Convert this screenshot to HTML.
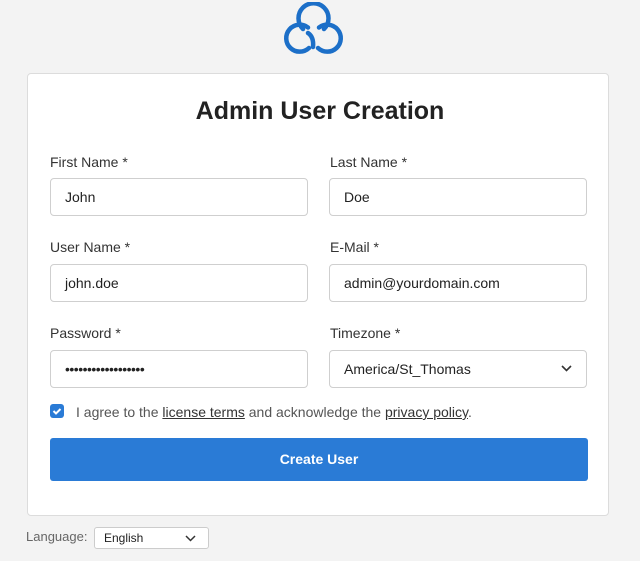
<!DOCTYPE html>
<html><head><style>
body{margin:0;background:#f3f3f3;font-family:"Liberation Sans",sans-serif;width:640px;height:561px;position:relative;overflow:hidden;color:#222}
.card{position:absolute;left:27px;top:73px;width:582px;height:443px;background:#fff;border:1px solid #dcdcdc;border-radius:4px;box-sizing:border-box}
h1{position:absolute;left:0;right:0;top:97px;margin:0;text-align:center;font-size:25px;font-weight:bold;color:#222}
.lbl{position:absolute;font-size:14px;color:#333}
.inp{position:absolute;width:258px;height:38px;border:1px solid #cfcfcf;border-radius:4px;box-sizing:border-box;font-size:14px;padding-left:14px;line-height:36px;background:#fff;color:#222}
.btn{position:absolute;left:50px;top:438px;width:538px;height:43px;background:#2a7bd6;border-radius:3px;color:#fff;font-weight:bold;font-size:14px;text-align:center;line-height:43px}
</style></head><body>
<svg style="position:absolute;left:283px;top:2px" width="62" height="54" viewBox="0 0 62 54" fill="none" stroke="#1c6fc8" stroke-width="4.5" stroke-linecap="round">
<path d="M20 27 A15 15 0 1 1 41 27"/>
<path d="M25 25.5 A13.5 13.5 0 1 0 26 46"/>
<path d="M36 25.5 A13.5 13.5 0 1 1 35 46"/>
<path d="M25 31 Q31 35 30 45"/>
</svg>
<div class="card"></div>
<h1>Admin User Creation</h1>
<div class="lbl" style="left:50px;top:154px">First Name *</div>
<div class="lbl" style="left:330px;top:154px">Last Name *</div>
<div class="inp" style="left:50px;top:178px">John</div>
<div class="inp" style="left:329px;top:178px">Doe</div>
<div class="lbl" style="left:50px;top:239px">User Name *</div>
<div class="lbl" style="left:330px;top:239px">E-Mail *</div>
<div class="inp" style="left:50px;top:264px">john.doe</div>
<div class="inp" style="left:329px;top:264px">admin@yourdomain.com</div>
<div class="lbl" style="left:50px;top:325px">Password *</div>
<div class="lbl" style="left:330px;top:325px">Timezone *</div>
<div class="inp" style="left:50px;top:350px;letter-spacing:-0.5px">••••••••••••••••••</div>
<div class="inp" style="left:329px;top:350px">America/St_Thomas<svg style="position:absolute;right:14px;top:14px" width="11" height="8"><path d="M1 1l4.5 4.5L10 1" stroke="#333" stroke-width="1.6" fill="none"/></svg></div>
<div style="position:absolute;left:50px;top:404px;width:14px;height:14px;background:#2a7bd6;border-radius:3px"><svg width="14" height="14"><path d="M3.5 7l2.5 2.5 4.5-4.5" stroke="#fff" stroke-width="2" fill="none"/></svg></div>
<div class="lbl" style="left:76px;top:404px;color:#555">I agree to the <u style="color:#333">license terms</u> and acknowledge the <u style="color:#333">privacy policy</u>.</div>
<div class="btn">Create User</div>
<div class="lbl" style="left:26px;top:529px;font-size:13px;color:#666">Language:</div>
<div style="position:absolute;left:94px;top:527px;width:115px;height:22px;border:1px solid #ccc;border-radius:3px;background:#fff;box-sizing:border-box;font-size:12px;line-height:20px;padding-left:9px">English<svg style="position:absolute;right:12px;top:7px" width="11" height="8"><path d="M1 1l4.5 4.5L10 1" stroke="#333" stroke-width="1.5" fill="none"/></svg></div>
</body></html>
